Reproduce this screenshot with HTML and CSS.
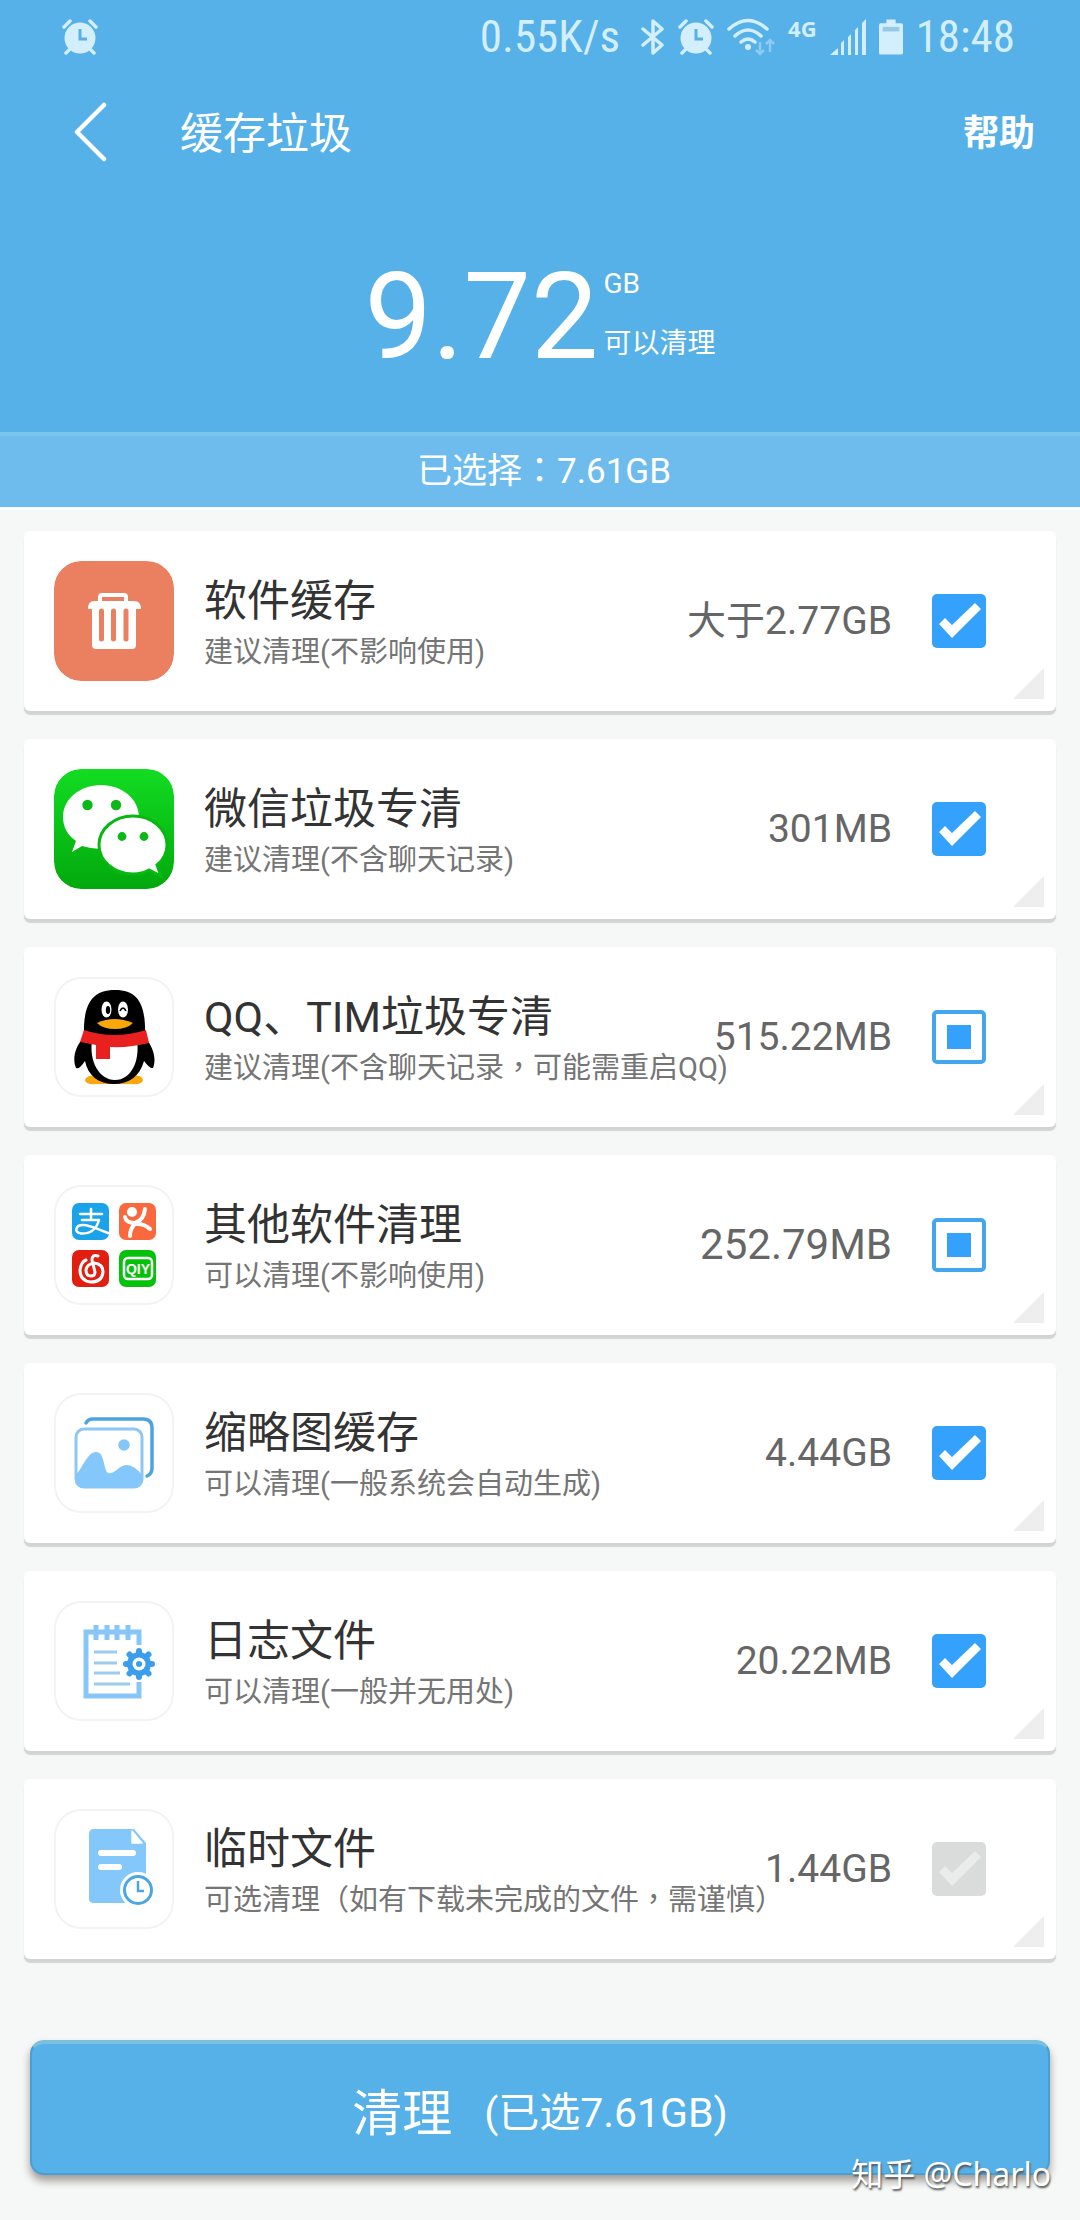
FILE: index.html
```html
<!DOCTYPE html>
<html lang="zh-CN">
<head>
<meta charset="utf-8">
<meta name="viewport" content="width=device-width, initial-scale=1">
<title>缓存垃圾</title>
<link rel="stylesheet" href="styles.css">
</head>
<body>
<svg class="defs" aria-hidden="true">
  <symbol id="alarm" viewBox="0 0 36 36">
    <circle cx="18" cy="19" r="15.500" fill="currentColor"/>
    <path d="M2 8L8 2M34 8L28 2M4 34L9 29M32 34L27 29" stroke="currentColor" stroke-width="3.500" stroke-linecap="round"/>
    <path d="M18 10V20H25" fill="none" stroke="#55b1e8" stroke-width="3"/>
  </symbol>
</svg>

<header class="top">
  <div class="status">
    <svg class="status-alarm" aria-hidden="true"><use href="#alarm"/></svg>
    <div class="status-right">
      <span class="status-text speed">0.55K/s</span>
      <svg width="24" height="38" viewBox="0 0 24 38" aria-hidden="true"><path d="M2 11L21 27L12 35V3L21 11L2 27" fill="none" stroke="currentColor" stroke-width="3.500" stroke-linejoin="round" stroke-linecap="round"/></svg>
      <svg class="status-alarm" aria-hidden="true"><use href="#alarm"/></svg>
      <svg width="48" height="38" viewBox="0 0 48 38" aria-hidden="true">
        <path d="M2 11Q21 -6 40 11M8 18Q21 6 34 18M14 24Q21 18 28 24" fill="none" stroke="currentColor" stroke-width="3.500" stroke-linecap="round"/>
        <circle cx="21" cy="29" r="3" fill="currentColor"/>
        <path d="M33 24V36M29 32L33 36L37 32M43 34V22M39 26L43 22L47 26" fill="none" stroke="#8fcaf0" stroke-width="2.500"/>
      </svg>
      <span class="network">4G</span>
      <svg width="36" height="36" viewBox="0 0 36 36" aria-hidden="true"><path d="M0 36L8 29V36ZM11 36V24L14 21V36ZM18 36V18L21 15V36ZM25 36V11L28 8V36ZM32 36V4L36 0V36Z" fill="currentColor"/></svg>
      <svg width="24" height="38" viewBox="0 0 26 38" aria-hidden="true"><path d="M8 0H18V4H24Q26 4 26 6V36Q26 38 24 38H2Q0 38 0 36V6Q0 4 2 4H8Z" fill="currentColor"/><path d="M4 8H22V13H4Z" fill="#96c9e4"/></svg>
      <span class="status-text">18:48</span>
    </div>
  </div>

  <nav class="bar">
    <button class="back" type="button" aria-label="返回"><svg width="34" height="60" viewBox="0 0 34 60" aria-hidden="true"><path d="M31 3L4 30L31 57" fill="none" stroke="currentColor" stroke-width="4.500" stroke-linecap="round" stroke-linejoin="round"/></svg></button>
    <h1>缓存垃圾</h1>
    <a class="help" href="#help">帮助</a>
  </nav>

  <div class="total">
    <span class="total-number">9.72</span>
    <div class="total-side"><span>GB</span><span>可以清理</span></div>
  </div>
  <p class="selected">已选择<span class="mid" lang="zh-TW">：</span>7.61GB</p>
</header>

<main>
  <ul class="list">
    <li class="card">
      <svg class="icon" viewBox="0 0 120 120" aria-hidden="true">
        <rect width="120" height="120" rx="27" fill="#eb8060"/>
        <path d="M46 41V36Q46 34 48 34H70Q72 34 72 36V41" fill="none" stroke="#fff" stroke-width="4"/>
        <path d="M34 48Q34 40 40 40H80Q87 40 87 48H82V84Q82 88 78 88H42Q38 88 38 84V48Z" fill="#fff"/>
        <path d="M47.500 50V78M59.500 50V78M72 50V78" stroke="#eb8060" stroke-width="5" stroke-linecap="round"/>
      </svg>
      <label class="info" for="c1"><span class="name">软件缓存</span><span class="note">建议清理(不影响使用)</span></label>
      <span class="size">大于2.77GB</span>
      <input class="tick" type="checkbox" id="c1" checked>
    </li>
    <li class="card">
      <svg class="icon" viewBox="0 0 120 120" aria-hidden="true">
        <defs><linearGradient id="green" x2="0" y2="1"><stop stop-color="#13dc22"/><stop offset="1" stop-color="#02a80c"/></linearGradient></defs>
        <rect width="120" height="120" rx="27" fill="url(#green)"/>
        <path d="M47 16C68 16 85 30 85 48S68 80 47 80Q38 80 28 77L18 83L22 72C13 66 9 57 9 48C9 30 26 16 47 16Z" fill="#fff"/>
        <path d="M79 47C98 47 113 60 113 76Q113 88 103 96L107 107L95 101Q88 105 79 105C60 105 45 92 45 76S60 47 79 47Z" fill="#fff" stroke="#08b812" stroke-width="3"/>
        <g fill="#0ab916"><circle cx="33.500" cy="36" r="5.200"/><circle cx="62" cy="36" r="5.200"/><circle cx="68" cy="67.500" r="4.400"/><circle cx="90" cy="67.500" r="4.400"/></g>
      </svg>
      <label class="info" for="c2"><span class="name">微信垃圾专清</span><span class="note">建议清理(不含聊天记录)</span></label>
      <span class="size">301MB</span>
      <input class="tick" type="checkbox" id="c2" checked>
    </li>
    <li class="card">
      <svg class="icon framed" viewBox="0 0 120 120" aria-hidden="true">
        <path d="M31 103Q32 98 45 98H77Q89 98 89 103Q89 108 76 107H44Q31 108 31 103Z" fill="#f9a70a"/>
        <path d="M30 60C19 72 19 84 22 91Q25 93 31 84C34 99 45 107 60 107S86 99 90 84Q96 92 99 91C102 84 101 72 91 60C92 30 86 13 61 13S29 30 30 60Z" fill="#000"/>
        <path d="M38 64H83C86 84 77 103 61 103S35 84 38 64Z" fill="#fff"/>
        <path d="M30 53Q60 63 92 53L95 66Q75 71 56 70V82H42V68L26 65Z" fill="#e8201f"/>
        <ellipse cx="52.500" cy="32.500" rx="5" ry="8" fill="#fff"/><ellipse cx="69" cy="32.500" rx="5" ry="8" fill="#fff"/>
        <ellipse cx="54" cy="33" rx="2.200" ry="4" fill="#000"/><path d="M66 34Q69 28 72 34" fill="none" stroke="#000" stroke-width="1.600"/>
        <path d="M43 46Q60 38 79 46Q73 52 61 52T43 46Z" fill="#f9a70a"/>
      </svg>
      <label class="info" for="c3"><span class="name">QQ、TIM垃圾专清</span><span class="note">建议清理(不含聊天记录<span class="mid" lang="zh-TW">，</span>可能需重启QQ)</span></label>
      <span class="size">515.22MB</span>
      <input class="tick" type="checkbox" id="c3" data-partial>
    </li>
    <li class="card">
      <svg class="icon framed" viewBox="0 0 120 120" aria-hidden="true">
        <rect x="18" y="18" width="37" height="37" rx="7" fill="#1aa3e8"/><rect x="65" y="18" width="37" height="37" rx="7" fill="#f9693d"/>
        <rect x="18" y="65" width="37" height="37" rx="7" fill="#e01f10"/><rect x="65" y="65" width="37" height="37" rx="7" fill="#06c10a"/>
        <g fill="none" stroke="#fff" stroke-linecap="round" stroke-linejoin="round">
          <path d="M26 29H48M37 24V35M28 35H45C42 46 34 49 27 48.500C20 48 21 40 29 40C37 40 45 45 54 48" stroke-width="2.600"/>
          <path d="M71 32Q72 38 81 38Q90 35 91 24M82 38Q76 43 76 51M83 39Q91 39 96 44" stroke-width="4"/>
          <path d="M44 71Q38 69 38 75L41 87Q41 91 37 91Q32 91 32 85Q33 79 40 78Q49 79 49 87Q48 97 37 97Q26 96 26 85Q27 77 32 75" stroke-width="3"/>
          <rect x="70" y="73" width="28" height="21" rx="4" stroke-width="2.500"/>
        </g>
        <circle cx="78" cy="27" r="5" fill="#fff"/>
        <text class="mark" x="84" y="89" text-anchor="middle">QIY</text>
      </svg>
      <label class="info" for="c4"><span class="name">其他软件清理</span><span class="note">可以清理(不影响使用)</span></label>
      <span class="size size-large">252.79MB</span>
      <input class="tick" type="checkbox" id="c4" data-partial>
    </li>
    <li class="card">
      <svg class="icon framed" viewBox="0 0 120 120" aria-hidden="true">
        <path d="M32 30Q34 26 39 26H89Q98 26 98 35V75Q98 81 93 83" fill="none" stroke="#4ba3e2" stroke-width="3.500" stroke-linecap="round"/>
        <rect x="22" y="36" width="66" height="58" rx="8" fill="none" stroke="#8cc6f3" stroke-width="3"/>
        <circle cx="70" cy="52" r="5.800" fill="#84c7fb"/>
        <path d="M22 82C30 72 34 59 42 59C51 59 49 76 54 80C60 82 65 72 73 72Q80 72 88 82V87Q88 95 80 95H30Q22 95 22 87Z" fill="#84c7fb"/>
      </svg>
      <label class="info" for="c5"><span class="name">缩略图缓存</span><span class="note">可以清理(一般系统会自动生成)</span></label>
      <span class="size">4.44GB</span>
      <input class="tick" type="checkbox" id="c5" checked>
    </li>
    <li class="card">
      <svg class="icon framed" viewBox="0 0 120 120" aria-hidden="true">
        <path d="M85 44V31H32V95H85V81" fill="none" stroke="#88c6f7" stroke-width="5"/>
        <path d="M42 24V39M53 24V39M63 24V39M74 24V39" stroke="#88c6f7" stroke-width="5"/>
        <path d="M40 51H63M40 62H63M40 72H66M40 83H76" stroke="#9ccbee" stroke-width="3"/>
        <g stroke="#3a9eed" fill="none"><path d="M85 50V76M72 63H98M75.500 53.500L94.500 72.500M94.500 53.500L75.500 72.500" stroke-width="6" stroke-linecap="round"/></g>
        <circle cx="85" cy="63" r="12" fill="#3a9eed"/><circle cx="85" cy="63" r="6.500" fill="#fff"/><circle cx="85" cy="63" r="3" fill="#3a9eed"/>
      </svg>
      <label class="info" for="c6"><span class="name">日志文件</span><span class="note">可以清理(一般并无用处)</span></label>
      <span class="size">20.22MB</span>
      <input class="tick" type="checkbox" id="c6" checked>
    </li>
    <li class="card">
      <svg class="icon framed" viewBox="0 0 120 120" aria-hidden="true">
        <path d="M40 20H80L92 34V90Q92 94 88 94H40Q35 94 35 90V25Q35 20 40 20Z" fill="#84c7fb"/>
        <path d="M78 22V34H88Z" fill="#fff" stroke="#fff" stroke-width="1.500" stroke-linejoin="round"/>
        <path d="M47 44H79M47 58H65" stroke="#fff" stroke-width="6" stroke-linecap="round"/>
        <circle cx="84" cy="81" r="18" fill="#fff"/>
        <circle cx="84" cy="81" r="13.500" fill="#fff" stroke="#4ba7e4" stroke-width="3"/>
        <path d="M84 72V82H90" fill="none" stroke="#4ba7e4" stroke-width="2.500"/>
      </svg>
      <label class="info" for="c7"><span class="name">临时文件</span><span class="note">可选清理（如有下载未完成的文件<span class="mid" lang="zh-TW">，</span>需谨慎）</span></label>
      <span class="size">1.44GB</span>
      <input class="tick" type="checkbox" id="c7">
    </li>
  </ul>
</main>

<footer class="footer">
  <button class="clean" type="button"><span class="clean-label">清理</span><span class="clean-size">(已选7.61GB)</span></button>
  <span class="watermark">知乎 @Charlo</span>
</footer>
<script src="script.js"></script>
</body>
</html>
```
FILE: styles.css
```css
* {
  box-sizing: border-box;
}

body {
  margin: 0;
  min-height: 100vh;
  background: #f6f8f7;
  color: #333;
  font-family: Roboto, "Noto Sans CJK SC", sans-serif;
}

.defs {
  position: absolute;
  width: 0;
  height: 0;
}

/* Full-width punctuation drawn in the middle of its cell */
.mid {
  font-family: "Noto Sans CJK TC", sans-serif;
  line-height: 0;
}

/* Header */
.top {
  background: #55b1e8;
  color: #fff;
  border-bottom: 3px solid #fafefe;
}

.status {
  display: flex;
  justify-content: space-between;
  align-items: center;
  height: 74px;
  padding: 0 65px 0 62px;
  color: #d3eefc;
}

.status-right {
  display: flex;
  align-items: center;
  gap: 13px;
}

.status-alarm {
  width: 36px;
  height: 36px;
}

.status-text {
  font-family: "Roboto Condensed", "Liberation Sans Narrow", Roboto, sans-serif;
  font-size: 45px;
  line-height: 74px;
}

.speed {
  margin-right: 8px;
}

.network {
  align-self: flex-start;
  padding-top: 16px;
  font-family: "Noto Sans", sans-serif;
  font-size: 22px;
  font-weight: 700;
  line-height: 24px;
}

.bar {
  display: flex;
  align-items: center;
  height: 116px;
  padding: 0 45px 0 73px;
}

.back {
  display: flex;
  padding: 0;
  border: 0;
  background: none;
  color: inherit;
}

.bar h1 {
  flex: 1;
  margin: 0 0 0 73px;
  padding-bottom: 4px;
  font-size: 43px;
  font-weight: 400;
}

.help {
  padding-bottom: 4px;
  color: inherit;
  font-size: 36px;
  font-weight: 700;
  text-decoration: none;
}

.total {
  display: flex;
  justify-content: center;
  align-items: center;
  height: 242px;
  padding-top: 11px;
}

.total-number {
  font-size: 120px;
  line-height: 120px;
}

.total-side {
  display: flex;
  flex-direction: column;
  gap: 20px;
  padding: 0 0 6px 5px;
  font-size: 28px;
  line-height: 40px;
}

.selected {
  margin: 0;
  padding-left: 8px;
  border-top: 4px solid #78c4ea;
  background: #6ebcee;
  font-size: 35px;
  line-height: 71px;
  text-align: center;
}

/* Cards */
.list {
  display: flex;
  flex-direction: column;
  gap: 28px;
  margin: 0;
  padding: 21px 24px 0;
  list-style: none;
}

.card {
  position: relative;
  display: flex;
  align-items: center;
  padding: 30px 70px 30px 30px;
  border-radius: 6px;
  background: #fff;
  box-shadow: 0 4px 1px #d3d5d4;
}

.card::after {
  content: "";
  position: absolute;
  right: 12px;
  bottom: 12px;
  width: 31px;
  height: 31px;
  background: #eee;
  clip-path: polygon(100% 0, 100% 100%, 0 100%);
}

.icon {
  flex: none;
  width: 120px;
  height: 120px;
  border-radius: 27px;
}

.framed {
  box-shadow: inset 0 0 0 2px #f3f3f3;
}

.mark {
  fill: #fff;
  font-family: "Liberation Sans Narrow", "Liberation Sans", sans-serif;
  font-size: 14px;
  font-weight: 700;
}

.info {
  display: flex;
  flex: 1;
  flex-direction: column;
  min-width: 0;
  padding: 2px 0 0 30px;
  white-space: nowrap;
}

.name {
  font-size: 43px;
  line-height: 60px;
}

.note {
  color: #757575;
  font-size: 29px;
  line-height: 42px;
}

.size {
  margin-right: 40px;
  color: #666;
  font-size: 39px;
  line-height: 60px;
  white-space: nowrap;
}

.size-large {
  font-size: 42px;
}

.tick {
  flex: none;
  width: 54px;
  height: 54px;
  margin: 0;
  appearance: none;
  border-radius: 5px;
  background: #d9dcdb;
}

.tick::before {
  content: "";
  display: block;
  width: 54px;
  height: 54px;
  background: #e9eceb;
  clip-path: polygon(7px 30px, 13px 24px, 20px 31px, 43px 9px, 49px 15px, 20px 44px);
}

.tick:checked {
  background: #34a2fc;
}

.tick:checked::before {
  background: #fff;
}

.tick:indeterminate {
  border: 4px solid #43a6ee;
  background: #fff;
}

.tick:indeterminate::before {
  width: 24px;
  height: 24px;
  margin: 11px;
  background: #34a2fc;
  clip-path: none;
}

/* Footer */
.footer {
  position: relative;
  padding: 81px 30px 45px;
}

.clean {
  display: flex;
  justify-content: center;
  align-items: center;
  gap: 32px;
  width: 100%;
  height: 135px;
  padding: 0;
  border: 2px solid #4a9fd0;
  border-top: 4px solid #7dbfde;
  border-radius: 14px;
  background: #55b1e8;
  box-shadow: 0 6px 8px #a09c98;
  color: #fff;
  font-family: inherit;
}

.clean-label {
  font-size: 50px;
}

.clean-size {
  font-size: 41px;
}

.watermark {
  position: absolute;
  right: 29px;
  bottom: 24px;
  color: #fff;
  font-family: "Noto Sans", "Noto Sans CJK SC", sans-serif;
  font-size: 32px;
  line-height: 44px;
  text-shadow: 1px 2px 2px #555;
}
```
FILE: script.js
```js
document.querySelectorAll("[data-partial]").forEach((box) => {
  box.indeterminate = true;
});
```
